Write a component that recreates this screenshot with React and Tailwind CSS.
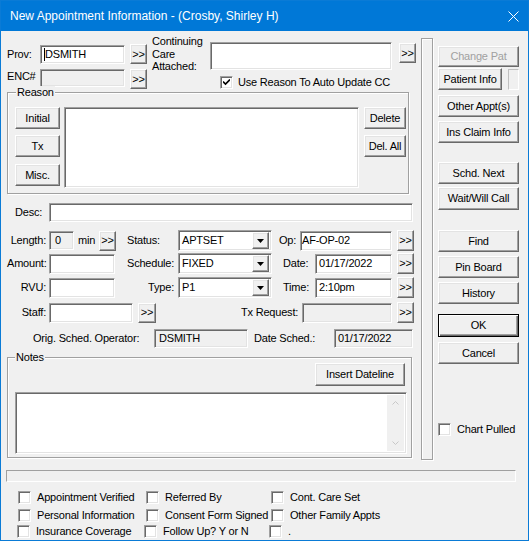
import React from 'react';

// classic win32 look helpers
const raised = 'bg-[#f0f0f0] border border-t-white border-l-white border-r-[#696969] border-b-[#696969] shadow-[inset_-1px_-1px_#a0a0a0,inset_1px_1px_#e3e3e3]';
const sunken = 'border border-t-[#a0a0a0] border-l-[#a0a0a0] border-r-white border-b-white shadow-[inset_1px_1px_#696969,inset_-1px_-1px_#e3e3e3]';
const etched = 'border border-[#a0a0a0] shadow-[inset_1px_1px_white,1px_1px_white]';

const Btn = ({ children, className = '', disabled }) => (
    <div className={`flex items-center justify-center shrink-0 ${raised} ${disabled ? 'text-[#a0a0a0]' : 'text-black'} ${className}`}>
        {children}
    </div>
);

const More = ({ className = '' }) => <Btn className={`w-[17px] h-[20px] ${className}`}>&gt;&gt;</Btn>;

const Field = ({ children, className = '', disabled }) => (
    <div className={`flex items-center shrink-0 whitespace-nowrap ${sunken} ${disabled ? 'bg-[#f0f0f0]' : 'bg-white'} ${className}`}>
        {children}
    </div>
);

const Combo = ({ value }) => (
    <Field className='w-[94px] h-[21px] pl-[3px] pr-[2px] justify-between'>
        <span>{value}</span>
        <div className={`w-[17px] h-[17px] ${raised} flex items-center justify-center`}>
            <svg width='7' height='4' viewBox='0 0 7 4'><path d='M0 0h7L3.5 4z' fill='black' /></svg>
        </div>
    </Field>
);

const Check = ({ checked, className = '' }) => (
    <div className={`w-[13px] h-[13px] bg-white shrink-0 flex items-center justify-center ${sunken} ${className}`}>
        {checked && (
            <svg width='7' height='7' viewBox='0 0 7 7'><path d='M0 2.5l2.5 2.5L7 0.5' stroke='black' strokeWidth='1.6' fill='none' /></svg>
        )}
    </div>
);

const Legend = ({ children, className = '' }) => (
    <span className={`-mt-[7px] h-[13px] leading-[13px] px-[1px] bg-[#f0f0f0] w-fit ${className}`}>{children}</span>
);

const CheckItem = ({ label, className = '' }) => (
    <div className={`flex items-center shrink-0 ${className}`}>
        <Check />
        <span className='ml-[6px] whitespace-nowrap'>{label}</span>
    </div>
);

const App = () => {
    return (
        <div className="w-[529px] h-[541px] bg-[#f0f0f0] border border-[#0a7bd6] flex flex-col overflow-hidden font-['Liberation_Sans',Arial,sans-serif] text-[11px] leading-[13px] tracking-[-0.2px] text-black">

            {/* Title bar */}
            <div className='h-[30px] shrink-0 bg-[#0078d7] flex items-center justify-between pl-[9px] pr-[9px]'>
                <span className='text-white text-[12px] tracking-normal'>New Appointment Information - (Crosby, Shirley H)</span>
                <svg width='11' height='11' viewBox='0 0 11 11'>
                    <path d='M0.5 0.5l10 10M10.5 0.5l-10 10' stroke='white' strokeWidth='1' />
                </svg>
            </div>

            {/* Body */}
            <div className='flex items-start shrink-0'>

                {/* Left column */}
                <div className='ml-[6px] w-[411px] flex flex-col'>

                    {/* Prov / Continuing care */}
                    <div className='mt-[4px] flex items-start'>
                        <div className='w-[141px] flex flex-col'>
                            <div className='mt-[9px] flex items-center'>
                                <span className='w-[33px]'>Prov:</span>
                                <Field className='w-[85px] h-[19px] pl-[3px]'>
                                    <span className='w-[1px] h-[13px] bg-black' />
                                    <span>DSMITH</span>
                                </Field>
                                <More className='ml-[5px] h-[19px]' />
                            </div>
                            <div className='mt-[5px] flex items-start'>
                                <span className='w-[33px] mt-[1px]'>ENC#</span>
                                <Field disabled className='w-[85px] h-[18px]' />
                                <More className='ml-[5px] h-[19px]' />
                            </div>
                        </div>
                        <div className='ml-[4px] w-[58px] leading-[12.5px]'>
                            Continuing<br />Care<br />Attached:
                        </div>
                        <div className='w-[208px] flex flex-col'>
                            <div className='mt-[7px] flex items-start'>
                                <Field className='w-[182px] h-[28px]' />
                                <More className='ml-[7px] mt-[1px]' />
                            </div>
                            <div className='mt-[6px] ml-[10px] flex items-center'>
                                <Check checked />
                                <span className='ml-[5px] whitespace-nowrap'>Use Reason To Auto Update CC</span>
                            </div>
                        </div>
                    </div>

                    {/* Reason */}
                    <div className={`mt-[3px] w-[402px] h-[102px] flex flex-col ${etched}`}>
                        <Legend className='ml-[8px]'>Reason</Legend>
                        <div className='mt-[8px] pl-[7px] flex items-start'>
                            <div className='w-[45px] flex flex-col'>
                                <Btn className='h-[22px]'>Initial</Btn>
                                <Btn className='h-[22px] mt-[6px]'>Tx</Btn>
                                <Btn className='h-[22px] mt-[7px]'>Misc.</Btn>
                            </div>
                            <Field className='ml-[4px] w-[295px] h-[81px]' />
                            <div className='ml-[5px] w-[42px] flex flex-col'>
                                <Btn className='h-[22px]'>Delete</Btn>
                                <Btn className='h-[22px] mt-[6px]'>Del. All</Btn>
                            </div>
                        </div>
                    </div>

                    {/* Desc */}
                    <div className='mt-[9px] flex items-center pl-[8px]'>
                        <span className='w-[34px]'>Desc:</span>
                        <Field className='w-[364px] h-[19px]' />
                    </div>

                    {/* Row: Length / Status / Op */}
                    <div className='mt-[8px] h-[21px] flex items-center'>
                        <span className='w-[39px] text-right whitespace-nowrap'>Length:</span>
                        <Field disabled className='ml-[3px] w-[25px] h-[19px] pl-[5px]'>0</Field>
                        <span className='ml-[4px] w-[21px]'>min</span>
                        <More className='h-[19px]' />
                        <span className='ml-[11px] w-[51px]'>Status:</span>
                        <Combo value='APTSET' />
                        <span className='ml-[7px] w-[21px]'>Op:</span>
                        <Field className='w-[92px] h-[20px] pl-[1px]'>AF-OP-02</Field>
                        <More className='ml-[5px] h-[21px]' />
                    </div>

                    {/* Row: Amount / Schedule / Date */}
                    <div className='mt-[2px] h-[21px] flex items-center'>
                        <span className='w-[39px] text-right whitespace-nowrap'>Amount:</span>
                        <Field className='ml-[3px] w-[66px] h-[20px]' />
                        <span className='ml-[12px] w-[51px] whitespace-nowrap'>Schedule:</span>
                        <Combo value='FIXED' />
                        <span className='ml-[11px] w-[32px]'>Date:</span>
                        <Field className='w-[77px] h-[20px] pl-[3px]'>01/17/2022</Field>
                        <More className='ml-[5px] h-[21px]' />
                    </div>

                    {/* Row: RVU / Type / Time */}
                    <div className='mt-[3px] h-[21px] flex items-center'>
                        <span className='w-[39px] text-right'>RVU:</span>
                        <Field className='ml-[3px] w-[66px] h-[20px]' />
                        <span className='ml-[12px] w-[51px] text-right pr-[4px]'>Type:</span>
                        <Combo value='P1' />
                        <span className='ml-[11px] w-[32px]'>Time:</span>
                        <Field className='w-[77px] h-[20px] pl-[3px]'>2:10pm</Field>
                        <More className='ml-[5px] h-[21px]' />
                    </div>

                    {/* Row: Staff / Tx Request */}
                    <div className='mt-[4px] h-[21px] flex items-center'>
                        <span className='w-[39px] text-right'>Staff:</span>
                        <Field className='ml-[3px] w-[84px] h-[20px]' />
                        <More className='ml-[5px] w-[18px]' />
                        <span className='ml-[85px] w-[61px] whitespace-nowrap'>Tx Request:</span>
                        <Field disabled className='w-[90px] h-[20px]' />
                        <More className='ml-[5px] h-[21px]' />
                    </div>

                    {/* Row: Orig sched */}
                    <div className='mt-[5px] h-[20px] flex items-center'>
                        <span className='ml-[26px] w-[121px] whitespace-nowrap'>Orig. Sched. Operator:</span>
                        <Field disabled className='w-[94px] h-[19px] pl-[4px]'>DSMITH</Field>
                        <span className='ml-[6px] w-[80px] whitespace-nowrap'>Date Sched.:</span>
                        <Field disabled className='w-[79px] h-[19px] pl-[3px]'>01/17/2022</Field>
                    </div>

                    {/* Notes */}
                    <div className={`mt-[9px] w-[405px] h-[101px] flex flex-col ${etched}`}>
                        <Legend className='ml-[7px]'>Notes</Legend>
                        <Btn className='-mt-[1px] self-end mr-[6px] w-[90px] h-[23px]'>Insert Dateline</Btn>
                        <Field className='mt-[6px] ml-[7px] w-[392px] h-[62px] items-stretch justify-end pr-[2px] py-[2px]'>
                            <div className='w-[17px] bg-[#f0f0f0] flex flex-col items-center justify-between py-[6px]'>
                                <svg width='7' height='4' viewBox='0 0 7 4'><path d='M0.5 3.5l3-3 3 3' stroke='#c8c8c8' fill='none' /></svg>
                                <svg width='7' height='4' viewBox='0 0 7 4'><path d='M0.5 0.5l3 3 3-3' stroke='#c8c8c8' fill='none' /></svg>
                            </div>
                        </Field>
                    </div>
                </div>

                {/* Separator frame */}
                <div className={`ml-[3px] mt-[7px] w-[12px] h-[422px] shrink-0 ${etched}`} />

                {/* Right buttons */}
                <div className='ml-[5px] w-[81px] flex flex-col shrink-0'>
                    <Btn disabled className='mt-[15px] h-[21px]'>Change Pat</Btn>
                    <div className='mt-[1px] flex items-center'>
                        <Btn className='w-[64px] h-[22px]'>Patient Info</Btn>
                        <div className='ml-[6px] w-[11px] h-[21px] border border-[#c0c0c0] border-r-white border-b-white' />
                    </div>
                    <Btn className='mt-[5px] h-[22px]'>Other Appt(s)</Btn>
                    <Btn className='mt-[4px] h-[22px]'>Ins Claim Info</Btn>
                    <Btn className='mt-[19px] h-[22px]'>Schd. Next</Btn>
                    <Btn className='mt-[3px] h-[23px]'>Wait/Will Call</Btn>
                    <Btn className='mt-[20px] h-[22px]'>Find</Btn>
                    <Btn className='mt-[4px] h-[22px]'>Pin Board</Btn>
                    <Btn className='mt-[4px] h-[22px]'>History</Btn>
                    <div className='mt-[10px] h-[23px] flex items-center justify-center border border-black bg-[#f0f0f0] shadow-[inset_1px_1px_white,inset_-1px_-1px_#696969,inset_-2px_-2px_#a0a0a0]'>OK</div>
                    <Btn className='mt-[5px] h-[22px]'>Cancel</Btn>
                    <div className='mt-[59px] flex items-center'>
                        <Check />
                        <span className='ml-[6px] whitespace-nowrap'>Chart Pulled</span>
                    </div>
                </div>
            </div>

            {/* Status strip */}
            <div className='mt-[10px] ml-[5px] w-[510px] h-[12px] shrink-0 border border-[#a0a0a0] border-r-white border-b-white' />

            {/* Check list */}
            <div className='mt-[9px] pl-[17px] flex'>
                <CheckItem label='Appointment Verified' className='w-[128px]' />
                <CheckItem label='Referred By' className='w-[125px]' />
                <CheckItem label='Cont. Care Set' />
            </div>
            <div className='mt-[5px] pl-[17px] flex'>
                <CheckItem label='Personal Information' className='w-[128px]' />
                <CheckItem label='Consent Form Signed' className='w-[125px]' />
                <CheckItem label='Other Family Appts' />
            </div>
            <div className='mt-[3px] pl-[16px] flex'>
                <CheckItem label='Insurance Coverage' className='w-[127px]' />
                <CheckItem label='Follow Up? Y or N' className='w-[125px]' />
                <CheckItem label='.' />
            </div>
        </div>
    );
};

export default App;
